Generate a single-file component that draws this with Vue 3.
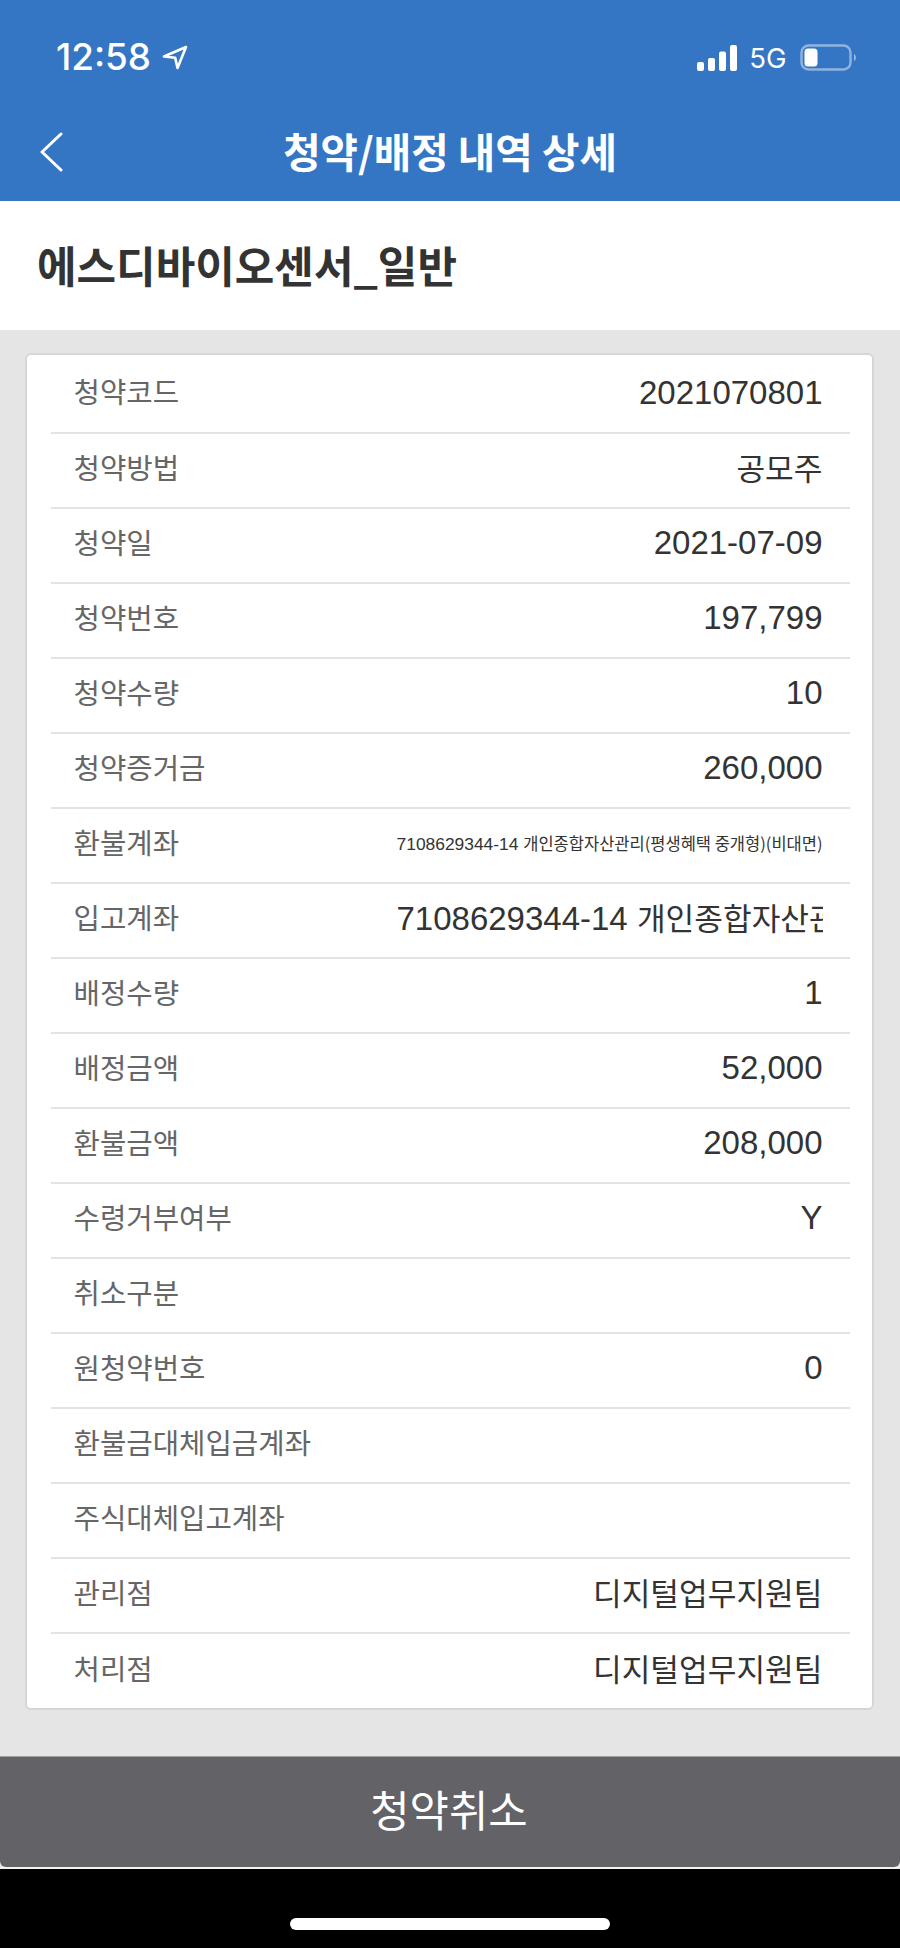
<script setup>
const rows = [
  { label: '청약코드', num: '2021070801' },
  { label: '청약방법', ko: '공모주' },
  { label: '청약일', num: '2021-07-09' },
  { label: '청약번호', num: '197,799' },
  { label: '청약수량', num: '10' },
  { label: '청약증거금', num: '260,000' },
  { label: '환불계좌', num: '7108629344-14 ', ko: '개인종합자산관리(평생혜택 중개형)(비대면)', kind: 'small' },
  { label: '입고계좌', num: '7108629344-14 ', ko: '개인종합자산관리(평생혜택 중개형)(비대면)', kind: 'clip' },
  { label: '배정수량', num: '1' },
  { label: '배정금액', num: '52,000' },
  { label: '환불금액', num: '208,000' },
  { label: '수령거부여부', num: 'Y' },
  { label: '취소구분' },
  { label: '원청약번호', num: '0' },
  { label: '환불금대체입금계좌' },
  { label: '주식대체입고계좌' },
  { label: '관리점', ko: '디지털업무지원팀' },
  { label: '처리점', ko: '디지털업무지원팀' }
]
</script>

<template>
  <div class="screen">
    <header class="top">
      <div class="status">
        <div class="status-left">
          <span class="time">12:58</span>
          <svg class="arrow" width="26" height="25" viewBox="0 0 26 25" fill="none">
            <path d="M2 11.5 L24 2 L15.5 23 L13.2 12.8 Z" stroke="#fff" stroke-width="2.6" stroke-linejoin="round" />
          </svg>
        </div>
        <div class="status-right">
          <svg class="signal" width="40" height="26" viewBox="0 0 40 26">
            <rect x="0" y="17" width="7" height="9" rx="2" fill="#fff" />
            <rect x="11" y="13" width="7" height="13" rx="2" fill="#fff" />
            <rect x="22" y="6.5" width="7" height="19.5" rx="2" fill="#fff" />
            <rect x="33" y="0" width="7" height="26" rx="2" fill="#fff" />
          </svg>
          <span class="net">5G</span>
          <svg class="battery" width="58" height="27" viewBox="0 0 58 27">
            <rect x="1.5" y="1.5" width="49" height="24" rx="7" fill="none" stroke="#fff" stroke-opacity="0.45" stroke-width="2.4" />
            <rect x="4.5" y="4.5" width="13" height="18" rx="3.5" fill="#fff" />
            <path d="M54 10 C56.5 11 56.5 16 54 17 Z" fill="#fff" fill-opacity="0.5" />
          </svg>
        </div>
      </div>
      <div class="nav">
        <svg class="back" width="24" height="40" viewBox="0 0 24 40" fill="none">
          <path d="M22 2 L3 20 L22 38" stroke="#fff" stroke-width="3" stroke-linecap="round" stroke-linejoin="round" />
        </svg>
        <h1 class="nav-title">청약/배정 내역 상세</h1>
      </div>
    </header>

    <section class="heading">
      <h2>에스디바이오센서_일반</h2>
    </section>

    <main class="body">
      <div class="card">
        <div v-for="row in rows" :key="row.label" class="row">
          <span class="label">{{ row.label }}</span>
          <span class="value" :class="row.kind">{{ row.num }}<span v-if="row.ko" class="ko">{{ row.ko }}</span></span>
        </div>
      </div>
    </main>

    <div class="action">
      <button class="cancel" type="button">청약취소</button>
    </div>

    <footer class="home">
      <div class="indicator"></div>
    </footer>
  </div>
</template>

<style scoped>
.screen {
  width: 900px;
  height: 1948px;
  display: flex;
  flex-direction: column;
  background: #e5e5e5;
  font-family: "Noto Sans CJK KR", "Liberation Sans", sans-serif;
  overflow: hidden;
}
.top {
  height: 201px;
  background: #3476c4;
  color: #fff;
  flex: none;
  display: flex;
  flex-direction: column;
}
.status {
  height: 116px;
  display: flex;
  justify-content: space-between;
  align-items: flex-start;
  padding: 44px 42px 0 56px;
  box-sizing: border-box;
}
.status-left {
  display: flex;
  align-items: center;
  gap: 11px;
}
.time {
  font-family: Inter, "Liberation Sans", sans-serif;
  font-size: 36.8px;
  font-weight: 500;
  line-height: 26px;
}
.status-right {
  display: flex;
  align-items: center;
  gap: 12px;
}
.net {
  font-family: Inter, "Liberation Sans", sans-serif;
  font-size: 27.5px;
  font-weight: 400;
  line-height: 26px;
  margin-right: 1.5px;
}
.nav {
  position: relative;
  flex: 1;
  display: flex;
  align-items: flex-start;
  justify-content: center;
}
.back {
  position: absolute;
  left: 39px;
  top: 16px;
}
.nav-title {
  margin: 7px 0 0;
  font-size: 40.7px;
  font-weight: 700;
  line-height: 56px;
}
.heading {
  height: 129px;
  flex: none;
  background: #fff;
  display: flex;
  align-items: center;
  padding: 0 0 4px 37px;
  box-sizing: border-box;
}
.heading h2 {
  margin: 0;
  font-size: 43px;
  font-weight: 700;
  line-height: 60px;
  color: #333;
}
.body {
  flex: 1;
  padding: 23px 26px 0 25px;
  box-sizing: border-box;
}
.card {
  box-sizing: border-box;
  height: 1357px;
  width: 849px;
  background: #fff;
  border: 2.5px solid #d6d6d6;
  border-radius: 6px;
  padding: 3.5px 22.5px 0 23.5px;
}
.row {
  box-sizing: border-box;
  height: 75px;
  display: flex;
  align-items: center;
  justify-content: space-between;
  padding: 0 27px 6px 23px;
  border-bottom: 2px solid #e3e3e3;
  white-space: nowrap;
}
.row:last-child {
  border-bottom: 0;
}
.row:first-child .label {
  margin-bottom: 3px;
}
.label {
  font-size: 28.7px;
  line-height: 40px;
  color: #666;
  flex: none;
}
.value {
  font-family: "Liberation Sans", "Noto Sans CJK KR", sans-serif;
  font-size: 33px;
  line-height: 40px;
  color: #333;
  margin-top: 2px;
}
.ko {
  font-family: "Noto Sans CJK KR", sans-serif;
  font-size: 31.2px;
}
.value.small {
  font-size: 17.4px;
}
.value.small .ko {
  font-size: 16.5px;
}
.value.clip {
  width: 426px;
  overflow: hidden;
  text-align: left;
}
.action {
  flex: none;
  height: 113px;
  box-sizing: border-box;
  background: #e5e5e5;
  border-bottom: 2px solid #f2f2f2;
}
.cancel {
  display: block;
  width: 100%;
  height: 111px;
  border: 0;
  border-top: 1px solid #a0a0a2;
  border-radius: 0 0 6px 6px;
  background: #636267;
  color: #fff;
  font-family: "Noto Sans CJK KR", sans-serif;
  font-size: 42.8px;
  font-weight: 400;
  padding: 0 2px 9px 0;
}
.home {
  flex: none;
  height: 79px;
  background: #000;
  display: flex;
  justify-content: center;
  padding-top: 49px;
  box-sizing: border-box;
}
.indicator {
  width: 320px;
  height: 12px;
  border-radius: 6px;
  background: #fff;
}
</style>
